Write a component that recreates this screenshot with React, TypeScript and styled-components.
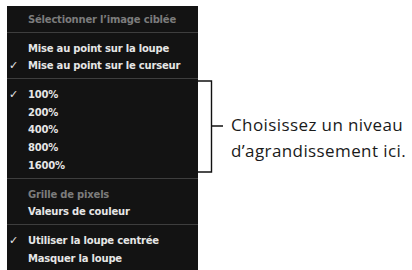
import React from 'react';
import styled, { createGlobalStyle } from 'styled-components';

const GlobalStyle = createGlobalStyle`
  html, body {
    margin: 0;
    padding: 0;
    background: #ffffff;
    overflow: hidden;
  }
`;

const Page = styled.div`
  display: flex;
  align-items: flex-start;
  padding: 6px 0 0 7px;
  width: 412px;
  height: 270px;
  box-sizing: border-box;
  overflow: hidden;
`;

const Menu = styled.div`
  align-self: stretch;
  width: 191px;
  flex: none;
  background: #131313;
  padding-top: 5px;
  box-sizing: border-box;
  overflow: hidden;
  font-family: 'DejaVu Sans', sans-serif;
  font-weight: bold;
  font-size: 10px;
`;

const Item = styled.div<{ $disabled?: boolean }>`
  position: relative;
  height: 17.7px;
  line-height: 17.7px;
  padding-left: 21px;
  color: ${p => (p.$disabled ? '#7c7c7c' : '#e6e6e6')};
  white-space: nowrap;
  letter-spacing: -0.2px;
`;

const Check = styled.span`
  position: absolute;
  left: 2px;
  top: 0;
  color: #e6e6e6;
  font-size: 11px;
`;

const Separator = styled.div`
  height: 1px;
  background: #3e3e3e;
  margin: 3px 0 7px;
`;

const Callout = styled.div`
  display: flex;
  align-items: flex-start;
  margin-top: 74px;
`;

const Bracket = styled.svg`
  display: block;
  flex: none;
`;

const Note = styled.div`
  margin-top: 32px;
  margin-left: 7px;
  font-family: 'Open Sans', sans-serif;
  font-size: 17px;
  letter-spacing: 0.4px;
  line-height: 26px;
  color: #1a1a1a;
  white-space: nowrap;
`;

type Entry = { label: string; checked?: boolean; disabled?: boolean } | 'sep';

const entries: Entry[] = [
  { label: 'Sélectionner l’image ciblée', disabled: true },
  'sep',
  { label: 'Mise au point sur la loupe' },
  { label: 'Mise au point sur le curseur', checked: true },
  'sep',
  { label: '100%', checked: true },
  { label: '200%' },
  { label: '400%' },
  { label: '800%' },
  { label: '1600%' },
  'sep',
  { label: 'Grille de pixels', disabled: true },
  { label: 'Valeurs de couleur' },
  'sep',
  { label: 'Utiliser la loupe centrée', checked: true },
  { label: 'Masquer la loupe' },
];

export default function App() {
  return (
    <>
      <GlobalStyle />
      <Page>
        <Menu>
          {entries.map((e, i) =>
            e === 'sep' ? (
              <Separator key={i} />
            ) : (
              <Item key={i} $disabled={e.disabled}>
                {e.checked && <Check>✓</Check>}
                {e.label}
              </Item>
            )
          )}
        </Menu>
        <Callout>
          <Bracket width="26" height="95" viewBox="0 0 26 95">
            <path
              d="M0 1 H13.5 V92 H0 M13.5 46 H25"
              fill="none"
              stroke="#111"
              strokeWidth="1.4"
            />
          </Bracket>
          <Note>
            Choisissez un niveau
            <br />
            d’agrandissement ici.
          </Note>
        </Callout>
      </Page>
    </>
  );
}
